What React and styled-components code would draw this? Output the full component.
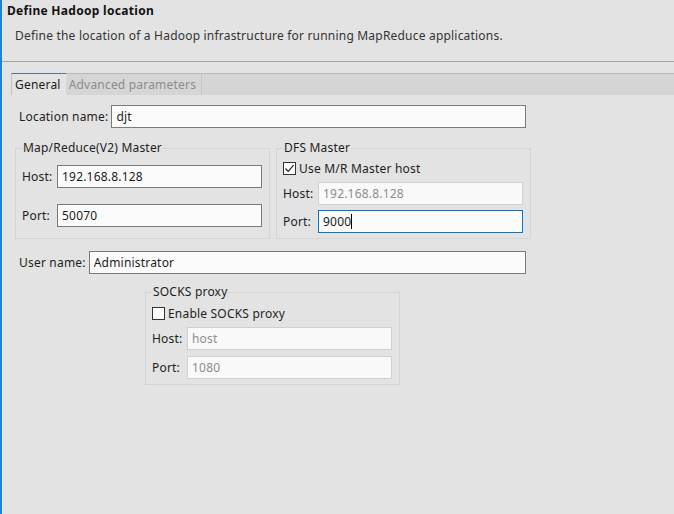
import React from "react";
import styled, { createGlobalStyle } from "styled-components";

const GlobalStyle = createGlobalStyle`
  html, body {
    margin: 0;
    padding: 0;
    background: #e3e3e3;
  }
  body {
    font-family: "Noto Sans", "Liberation Sans", sans-serif;
    font-size: 12px;
    letter-spacing: 0.2px;
    color: #1b1b1b;
  }
`;

const Window = styled.div`
  width: 674px;
  height: 514px;
  box-sizing: border-box;
  border-left: 2px solid #1c84d8;
  background: #e3e3e3;
  overflow: hidden;
`;

const Banner = styled.div`
  height: 62px;
  box-sizing: border-box;
  border-bottom: 1px solid #a3a3a3;
  padding: 3px 0 0 5px;
`;

const Title = styled.div`
  font-weight: bold;
  line-height: 16px;
  letter-spacing: 0.3px;
  color: #111;
`;

const Description = styled.div`
  margin: 9px 0 0 8px;
  line-height: 16px;
  color: #333;
`;

const TabFolder = styled.div`
  margin: 11px 0 0 9px;
`;

const TabStrip = styled.div`
  display: flex;
  height: 22px;
  box-sizing: border-box;
  background: #d5d5d5;
  border-top: 1px solid #b8b8b8;
`;

const Tab = styled.div`
  display: flex;
  align-items: center;
  height: 22px;
  margin-top: -1px;
  box-sizing: border-box;
  padding: 0 5px 0 3px;
  border-top: 1px solid ${(p) => (p.$active ? "#4d77a3" : "#b8b8b8")};
  border-left: ${(p) => (p.$active ? "1px solid #c2c2c2" : "none")};
  border-right: ${(p) => (p.$active ? "none" : "1px solid #c6c6c6")};
  background: ${(p) => (p.$active ? "#e3e3e3" : "#d5d5d5")};
  color: ${(p) => (p.$active ? "#1b1b1b" : "#8c8c8c")};
`;

const TabBody = styled.div`
  padding: 10px 0 0 4px;
`;

const FormRow = styled.div`
  display: flex;
  align-items: center;
  gap: 3px;
  width: 507px;
  margin: ${(p) => p.$mt || 0}px 0 0 4px;
`;

const Label = styled.span`
  white-space: nowrap;
  color: #1e1e1e;
`;

const Field = styled.div`
  display: flex;
  align-items: center;
  flex: 1;
  min-width: 0;
  height: 23px;
  box-sizing: border-box;
  padding: 0 4px;
  border: 1px solid
    ${(p) =>
      p.$state === "focused"
        ? "#0078d7"
        : p.$state === "disabled"
        ? "#d0d0d0"
        : "#7a7a7a"};
  background: ${(p) => (p.$state === "disabled" ? "#f9f9f9" : "#fbfbfb")};
  color: ${(p) => (p.$state === "disabled" ? "#8d8d8d" : "#1b1b1b")};
  white-space: nowrap;
`;

const Caret = styled.span`
  display: inline-block;
  width: 1px;
  height: 15px;
  background: #000;
`;

const GroupsRow = styled.div`
  display: flex;
  gap: 6px;
  margin-top: 13px;
`;

const Group = styled.fieldset`
  width: 255px;
  box-sizing: border-box;
  min-width: 0;
  margin: ${(p) => p.$mt || 0}px 0 0 ${(p) => p.$ml || 0}px;
  padding: ${(p) => p.$pt}px 7px ${(p) => p.$pb}px 6px;
  border: 1px solid #d4d4d4;
`;

const Legend = styled.legend`
  padding: 0 1px;
  line-height: 14px;
  color: #1e1e1e;
`;

const FieldGrid = styled.div`
  display: grid;
  grid-template-columns: 31px 1fr;
  column-gap: 4px;
  row-gap: ${(p) => p.$gap}px;
  align-items: center;
`;

const CheckRow = styled.label`
  display: flex;
  align-items: center;
  gap: 3px;
  height: 13px;
  margin-bottom: 7px;
  color: #1e1e1e;
`;

const Box = styled.span`
  display: inline-flex;
  align-items: center;
  justify-content: center;
  width: 13px;
  height: 13px;
  box-sizing: border-box;
  border: 1px solid #333;
  background: #fff;
`;

function Checkbox({ checked, children }) {
  return (
    <CheckRow>
      <Box>
        {checked && (
          <svg width="11" height="11" viewBox="0 0 11 11">
            <path d="M1.5 5.5 L4.2 8.3 L9.6 2.2" fill="none" stroke="#222" strokeWidth="1.2" />
          </svg>
        )}
      </Box>
      {children}
    </CheckRow>
  );
}

export default function App() {
  return (
    <Window>
      <GlobalStyle />
      <Banner>
        <Title>Define Hadoop location</Title>
        <Description>
          Define the location of a Hadoop infrastructure for running MapReduce applications.
        </Description>
      </Banner>
      <TabFolder>
        <TabStrip>
          <Tab $active>General</Tab>
          <Tab>Advanced parameters</Tab>
        </TabStrip>
        <TabBody>
          <FormRow>
            <Label>Location name:</Label>
            <Field>djt</Field>
          </FormRow>

          <GroupsRow>
            <Group $pt={10} $pb={11}>
              <Legend>Map/Reduce(V2) Master</Legend>
              <FieldGrid $gap={16}>
                <Label>Host:</Label>
                <Field>192.168.8.128</Field>
                <Label>Port:</Label>
                <Field>50070</Field>
              </FieldGrid>
            </Group>
            <Group $pt={7} $pb={5}>
              <Legend>DFS Master</Legend>
              <Checkbox checked>Use M/R Master host</Checkbox>
              <FieldGrid $gap={5}>
                <Label>Host:</Label>
                <Field $state="disabled">192.168.8.128</Field>
                <Label>Port:</Label>
                <Field $state="focused">
                  9000
                  <Caret />
                </Field>
              </FieldGrid>
            </Group>
          </GroupsRow>

          <FormRow $mt={12}>
            <Label>User name:</Label>
            <Field>Administrator</Field>
          </FormRow>

          <Group $ml={130} $mt={11} $pt={8} $pb={5}>
            <Legend>SOCKS proxy</Legend>
            <Checkbox>Enable SOCKS proxy</Checkbox>
            <FieldGrid $gap={6}>
              <Label>Host:</Label>
              <Field $state="disabled">host</Field>
              <Label>Port:</Label>
              <Field $state="disabled">1080</Field>
            </FieldGrid>
          </Group>
        </TabBody>
      </TabFolder>
    </Window>
  );
}
